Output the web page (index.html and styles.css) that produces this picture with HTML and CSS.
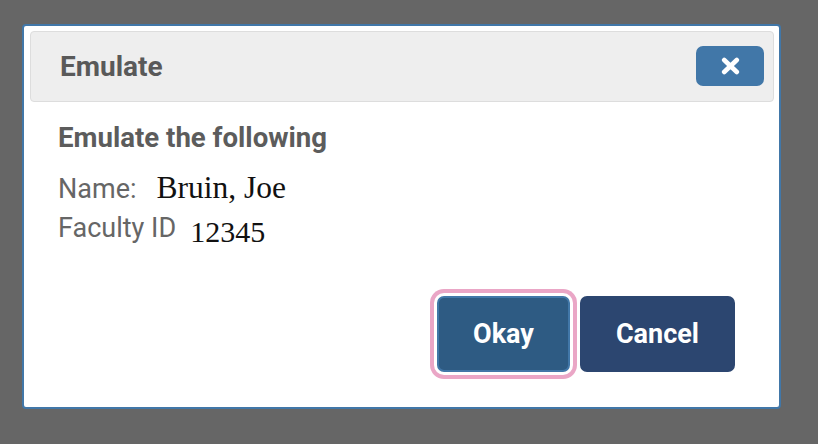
FILE: index.html
```html
<!DOCTYPE html>
<html>
<head>
<meta charset="utf-8">
<link rel="stylesheet" href="styles.css">
</head>
<body>
<div class="dialog">
  <div class="header">
    <h1 class="title">Emulate</h1>
    <button class="close" aria-label="Close">
      <svg width="19" height="18" viewBox="0 0 19 18"><path d="M3.2 3 L15.8 15 M15.8 3 L3.2 15" stroke="#fff" stroke-width="4.6" stroke-linecap="round" fill="none"/></svg>
    </button>
  </div>
  <div class="content">
    <h2 class="heading">Emulate the following</h2>
    <div class="row">
      <span class="label">Name:</span>
      <span class="value">Bruin, Joe</span>
    </div>
    <div class="row">
      <span class="label">Faculty ID</span>
      <span class="value value-id">12345</span>
    </div>
  </div>
  <div class="footer">
    <button class="btn btn-okay">Okay</button>
    <button class="btn btn-cancel">Cancel</button>
  </div>
</div>
</body>
</html>
```
FILE: styles.css
```css
html, body {
  margin: 0;
  padding: 0;
  background: #666666;
  height: 100%;
}
body {
  font-family: Roboto, "Liberation Sans", sans-serif;
}
.dialog {
  box-sizing: border-box;
  margin: 24px 0 0 22px;
  width: 759px;
  background: #ffffff;
  border: 2px solid #4177a8;
  border-radius: 4px;
  padding: 5px 5px 35px 6px;
  display: flex;
  flex-direction: column;
}
.header {
  display: flex;
  align-items: center;
  justify-content: space-between;
  background: #eeeeee;
  border: 1px solid #dddddd;
  border-radius: 4px;
  padding: 14px 9px 15px 29px;
}
.title {
  margin: 0;
  padding-top: 2px;
  font-size: 28px;
  line-height: 32px;
  font-weight: 700;
  color: #595959;
}
.close {
  width: 68px;
  height: 40px;
  border: none;
  border-radius: 7px;
  background: #4177a8;
  display: flex;
  align-items: center;
  justify-content: center;
  padding: 0;
}
.close svg {
  display: block;
}
.content {
  padding: 21px 0 0 28px;
}
.heading {
  margin: 0 0 20px 0;
  font-size: 27.6px;
  line-height: 30px;
  font-weight: 700;
  color: #5c5c5c;
}
.row {
  display: flex;
  align-items: baseline;
  height: 30px;
}
.row + .row {
  margin-top: 9px;
}
.label {
  font-size: 27px;
  line-height: 30px;
  color: #666666;
}
.value {
  font-family: "Liberation Serif", "Times New Roman", serif;
  font-size: 31.5px;
  line-height: 30px;
  color: #111111;
  margin-left: 20px;
}
.value-id {
  font-size: 30px;
  margin-left: 14px;
  position: relative;
  top: 5px;
}
.footer {
  display: flex;
  justify-content: flex-end;
  gap: 10px;
  padding: 54px 39px 0 0;
}
.btn {
  font-family: Roboto, "Liberation Sans", sans-serif;
  font-size: 27px;
  font-weight: 700;
  color: #ffffff;
  height: 76px;
  border-radius: 7px;
  padding: 0 34px;
  border: 2px solid transparent;
}
.btn-okay {
  background: #2e5b83;
  border-color: #4177a8;
  box-shadow: 0 0 0 3px #ffffff, 0 0 0 7px #eaa6c6;
}
.btn-cancel {
  background: #2c4670;
  border-color: #2c4670;
  padding: 0 34px;
}
```
